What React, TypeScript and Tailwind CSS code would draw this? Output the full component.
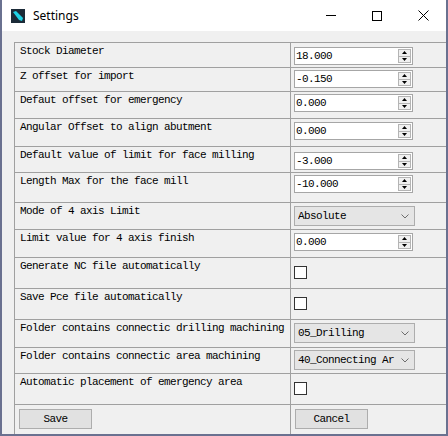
import type { ReactNode } from "react";

const mono = "font-['Liberation_Mono','DejaVu_Sans_Mono',monospace] text-[11px] leading-[12px] tracking-[-0.6px] text-black";

const Spin = ({ value }: { value: string }) => (
  <div className="flex h-[18px] w-[119px] items-center border border-[#a6a6a6] bg-white">
    <span className={`${mono} flex-1 pl-[1px]`}>{value}</span>
    <div className="mr-[1px] flex h-[14px] w-[13px] flex-col border border-[#b4b4b4] bg-[#f0f0f0]">
      <div className="flex flex-1 items-center justify-center border-b border-[#b4b4b4]">
        <svg width="5" height="3" viewBox="0 0 5 3">
          <path d="M0 3 L2.5 0 L5 3 Z" fill="#000" />
        </svg>
      </div>
      <div className="flex flex-1 items-center justify-center">
        <svg width="5" height="3" viewBox="0 0 5 3">
          <path d="M0 0 L2.5 3 L5 0 Z" fill="#000" />
        </svg>
      </div>
    </div>
  </div>
);

const Combo = ({ value }: { value: string }) => (
  <div className="flex h-[20px] w-[121px] items-center border border-[#adadad] bg-[#e5e5e5] pl-[3px] pr-[5px]">
    <span className={`${mono} flex-1 overflow-hidden whitespace-nowrap`}>{value}</span>
    <svg width="8" height="5" viewBox="0 0 8 5">
      <path d="M0.5 0.5 L4 4 L7.5 0.5" fill="none" stroke="#6d6d6d" strokeWidth="1" />
    </svg>
  </div>
);

const Check = () => <div className="h-[13px] w-[13px] border border-[#333333] bg-white" />;

const Btn = ({ label }: { label: string }) => (
  <div className={`${mono} flex h-[20px] w-[73px] items-center justify-center border border-[#adadad] bg-[#e1e1e1]`}>
    {label}
  </div>
);

type Row = { label: string; h: string; top: string; ctrl: ReactNode };

const rows: Row[] = [
  { label: "Stock Diameter", h: "h-[25px]", top: "pt-[4px]", ctrl: <Spin value="18.000" /> },
  { label: "Z offset for import", h: "h-[24px]", top: "pt-[2px]", ctrl: <Spin value="-0.150" /> },
  { label: "Defaut offset for emergency", h: "h-[27px]", top: "pt-[2px]", ctrl: <Spin value="0.000" /> },
  { label: "Angular Offset to align abutment", h: "h-[28px]", top: "pt-[3px]", ctrl: <Spin value="0.000" /> },
  { label: "Default value of limit for face milling", h: "h-[26px]", top: "pt-[5px]", ctrl: <Spin value="-3.000" /> },
  { label: "Length Max for the face mill", h: "h-[30px]", top: "pt-[2px]", ctrl: <Spin value="-10.000" /> },
  { label: "Mode of 4 axis Limit", h: "h-[27px]", top: "pt-[3px]", ctrl: <Combo value="Absolute" /> },
  { label: "Limit value for 4 axis finish", h: "h-[28px]", top: "pt-[3px]", ctrl: <Spin value="0.000" /> },
  { label: "Generate NC file automatically", h: "h-[31px]", top: "pt-[8px]", ctrl: <Check /> },
  { label: "Save Pce file automatically", h: "h-[31px]", top: "pt-[8px]", ctrl: <Check /> },
  { label: "Folder contains connectic drilling machining", h: "h-[28px]", top: "pt-[3px]", ctrl: <Combo value="05_Drilling" /> },
  { label: "Folder contains connectic area machining", h: "h-[26px]", top: "pt-[2px]", ctrl: <Combo value="40_Connecting Ar" /> },
  { label: "Automatic placement of emergency area", h: "h-[31px]", top: "pt-[8px]", ctrl: <Check /> },
];

export default function App() {
  return (
    <div className="flex h-[436px] w-[448px] flex-col border-x-2 border-b-2 border-[#6a7190] bg-[#f0f0f0]">
      <div className="flex h-[31px] items-center bg-white">
        <div className="ml-[9px] flex h-[14px] w-[14px] items-center justify-center bg-[#1c2b38]">
          <svg width="14" height="14" viewBox="0 0 14 14">
            <path d="M2 3 L5 2 L12 9 L11 12 L8 11 Z" fill="#1fd3e6" />
          </svg>
        </div>
        <span className="ml-[8px] font-['Noto_Sans','Open_Sans',sans-serif] text-[12px] text-black">Settings</span>
        <div className="ml-auto flex h-full items-center">
          <div className="flex w-[46px] justify-center">
            <div className="h-px w-[10px] bg-black" />
          </div>
          <div className="flex w-[46px] justify-center">
            <div className="h-[10px] w-[10px] border border-black" />
          </div>
          <div className="flex w-[46px] justify-center">
            <svg width="11" height="11" viewBox="0 0 11 11">
              <path d="M0.5 0.5 L10.5 10.5 M10.5 0.5 L0.5 10.5" stroke="#000" strokeWidth="1" />
            </svg>
          </div>
        </div>
      </div>
      <div className="pl-[12px] pt-[11px]">
        <div className="flex flex-col border-l border-t border-[#a0a0a0]">
          {rows.map((r) => (
            <div key={r.label} className={`flex ${r.h} border-b border-[#a0a0a0]`}>
              <div className={`${mono} w-[276px] overflow-hidden whitespace-nowrap border-r border-[#a0a0a0] pl-[5px] pt-[2px]`}>
                {r.label}
              </div>
              <div className={`flex-1 pl-[3px] ${r.top}`}>{r.ctrl}</div>
            </div>
          ))}
          <div className="flex h-[29px]">
            <div className="w-[276px] border-r border-[#a0a0a0] pl-[4px] pt-[4px]">
              <Btn label="Save" />
            </div>
            <div className="flex-1 pl-[4px] pt-[4px]">
              <Btn label="Cancel" />
            </div>
          </div>
        </div>
      </div>
    </div>
  );
}
